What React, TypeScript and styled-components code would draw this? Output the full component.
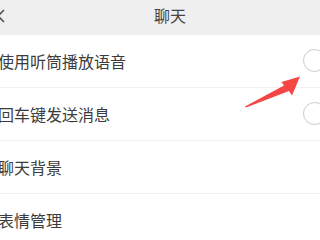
import React from "react";
import styled, { createGlobalStyle } from "styled-components";

const Global = createGlobalStyle`
  html, body { margin: 0; padding: 0; background: #ffffff; overflow: hidden; }
  * { box-sizing: border-box; }
`;

const Screen = styled.div`
  position: relative;
  width: 320px;
  height: 240px;
  overflow: hidden;
  background: #ffffff;
  font-family: "Noto Sans CJK SC", "Noto Sans", sans-serif;
  color: #3a3a3a;
`;

const Header = styled.div`
  height: 35px;
  background: #efefef;
  display: flex;
  align-items: center;
  position: relative;
`;

const Back = styled.svg`
  width: 8px;
  height: 14px;
  margin-left: -3px;
  margin-top: -4px;
`;

const Title = styled.div`
  flex: 1;
  text-align: center;
  font-size: 16px;
  line-height: 20px;
  margin-top: -5px;
  padding-left: 15px;
  color: #444;
`;

const List = styled.div`
  display: flex;
  flex-direction: column;
`;

const Row = styled.div`
  height: 53px;
  display: flex;
  align-items: center;
  justify-content: space-between;
  border-bottom: 1px solid #f1f1f1;
`;

const Label = styled.span`
  font-size: 16px;
  line-height: 20px;
  margin-left: -2px;
  color: #3c3c3c;
`;

const Switch = styled.span`
  width: 23px;
  height: 23px;
  border-radius: 50%;
  border: 1.5px solid #cacaca;
  background: #fff;
  margin-right: -6px;
  margin-top: -2px;
`;

const Arrow = styled.svg`
  position: absolute;
  left: 240px;
  top: 70px;
  width: 70px;
  height: 45px;
`;

const rows = [
  { label: "使用听筒播放语音", toggle: true },
  { label: "回车键发送消息", toggle: true },
  { label: "聊天背景", toggle: false },
  { label: "表情管理", toggle: false },
];

export default function App() {
  return (
    <Screen>
      <Global />
      <Header>
        <Back viewBox="0 0 8 14">
          <polyline points="7,1 1,7 7,13" fill="none" stroke="#555" strokeWidth="1.6" />
        </Back>
        <Title>聊天</Title>
      </Header>
      <List>
        {rows.map((r) => (
          <Row key={r.label}>
            <Label>{r.label}</Label>
            {r.toggle && <Switch />}
          </Row>
        ))}
      </List>
      <Arrow viewBox="0 0 70 45">
        <path d="M5 36.5 L44 15.5 L41.5 12 L60 6.5 L52 25.5 L49 21 L6 37.5 Z" fill="#f54646" />
      </Arrow>
    </Screen>
  );
}
